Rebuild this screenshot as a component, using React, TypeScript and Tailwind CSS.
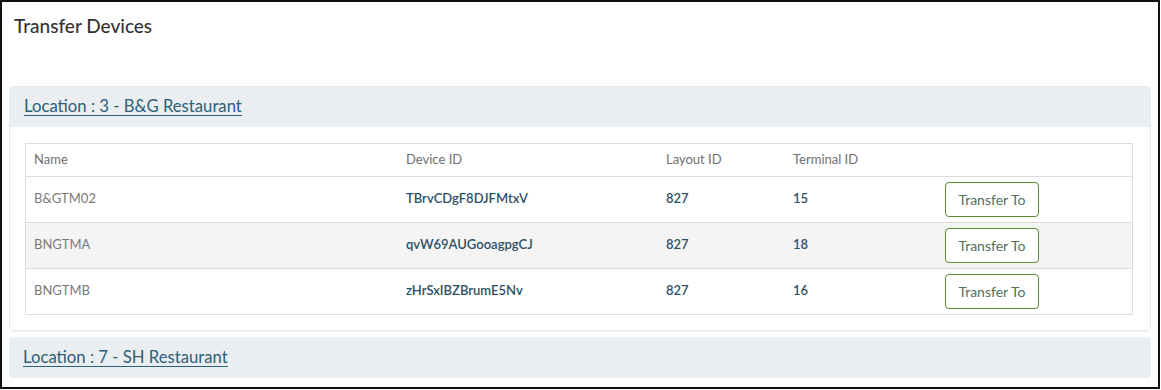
import React from "react";

const rows = [
  { name: "B&GTM02", device: "TBrvCDgF8DJFMtxV", layout: "827", terminal: "15" },
  { name: "BNGTMA", device: "qvW69AUGooagpgCJ", layout: "827", terminal: "18" },
  { name: "BNGTMB", device: "zHrSxIBZBrumE5Nv", layout: "827", terminal: "16" },
];

export default function App() {
  return (
    <div
      className="w-[1161px] h-[390px] bg-white overflow-hidden"
      style={{ fontFamily: "Lato, 'Noto Sans', sans-serif" }}
    >
      <div className="w-[1160px] h-[389px] border-2 border-[#111] px-[7px] box-border">
        <h1 className="pl-[5px] pt-[12px] text-[19px] leading-[24px] font-medium text-[#333]">
          Transfer Devices
        </h1>

        <div className="mt-[48px] rounded-[4px] border border-[#e6e8e9] shadow-[0_1px_1px_rgba(0,0,0,0.04)]">
          <div className="h-[40px] bg-[#ebeef0] rounded-t-[4px] flex items-center px-[14px]">
            <span className="text-[16.7px] text-[#2c5f78] underline underline-offset-[3px] decoration-1">
              Location : 3 - B&amp;G Restaurant
            </span>
          </div>
          <div className="bg-white px-[15px] pt-[16px] pb-[15px] rounded-b-[4px]">
            <div className="border border-[#dcdcdc] w-[1108px]">
              <div className="h-[33px] flex items-center text-[13px] text-[#707070] border-b border-[#dcdcdc]">
                <div className="w-[380px] pl-[8px]">Name</div>
                <div className="w-[260px]">Device ID</div>
                <div className="w-[127px]">Layout ID</div>
                <div className="w-[150px]">Terminal ID</div>
                <div className="flex-1" />
              </div>
              {rows.map((r, i) => (
                <div
                  key={r.name}
                  className={
                    "flex items-center text-[13px] " +
                    (i === 1 ? "bg-[#f4f4f4] " : "bg-white ") +
                    (i < rows.length - 1 ? "h-[46px] border-b border-[#dcdcdc]" : "h-[45px]")
                  }
                >
                  <div className="w-[380px] pl-[8px] text-[#7a7a7a] pb-[2px]">{r.name}</div>
                  <div className="w-[260px] font-semibold text-[#2d4f66] pb-[2px]">{r.device}</div>
                  <div className="w-[127px] font-semibold text-[#2d4f66] pb-[2px]">{r.layout}</div>
                  <div className="w-[152px] font-semibold text-[#2d4f66] pb-[2px]">{r.terminal}</div>
                  <div className="flex-1">
                    <button className="w-[94px] h-[35px] border border-[#5a8a32] rounded-[4px] text-[14px] text-[#52705a] bg-white">
                      Transfer To
                    </button>
                  </div>
                </div>
              ))}
            </div>
          </div>
        </div>

        <div className="mt-[6px] h-[41px] bg-[#ebeef0] rounded-[4px] flex items-center px-[14px]">
          <span className="text-[16.7px] text-[#2c5f78] underline underline-offset-[3px] decoration-1">
            Location : 7 - SH Restaurant
          </span>
        </div>
      </div>
    </div>
  );
}
